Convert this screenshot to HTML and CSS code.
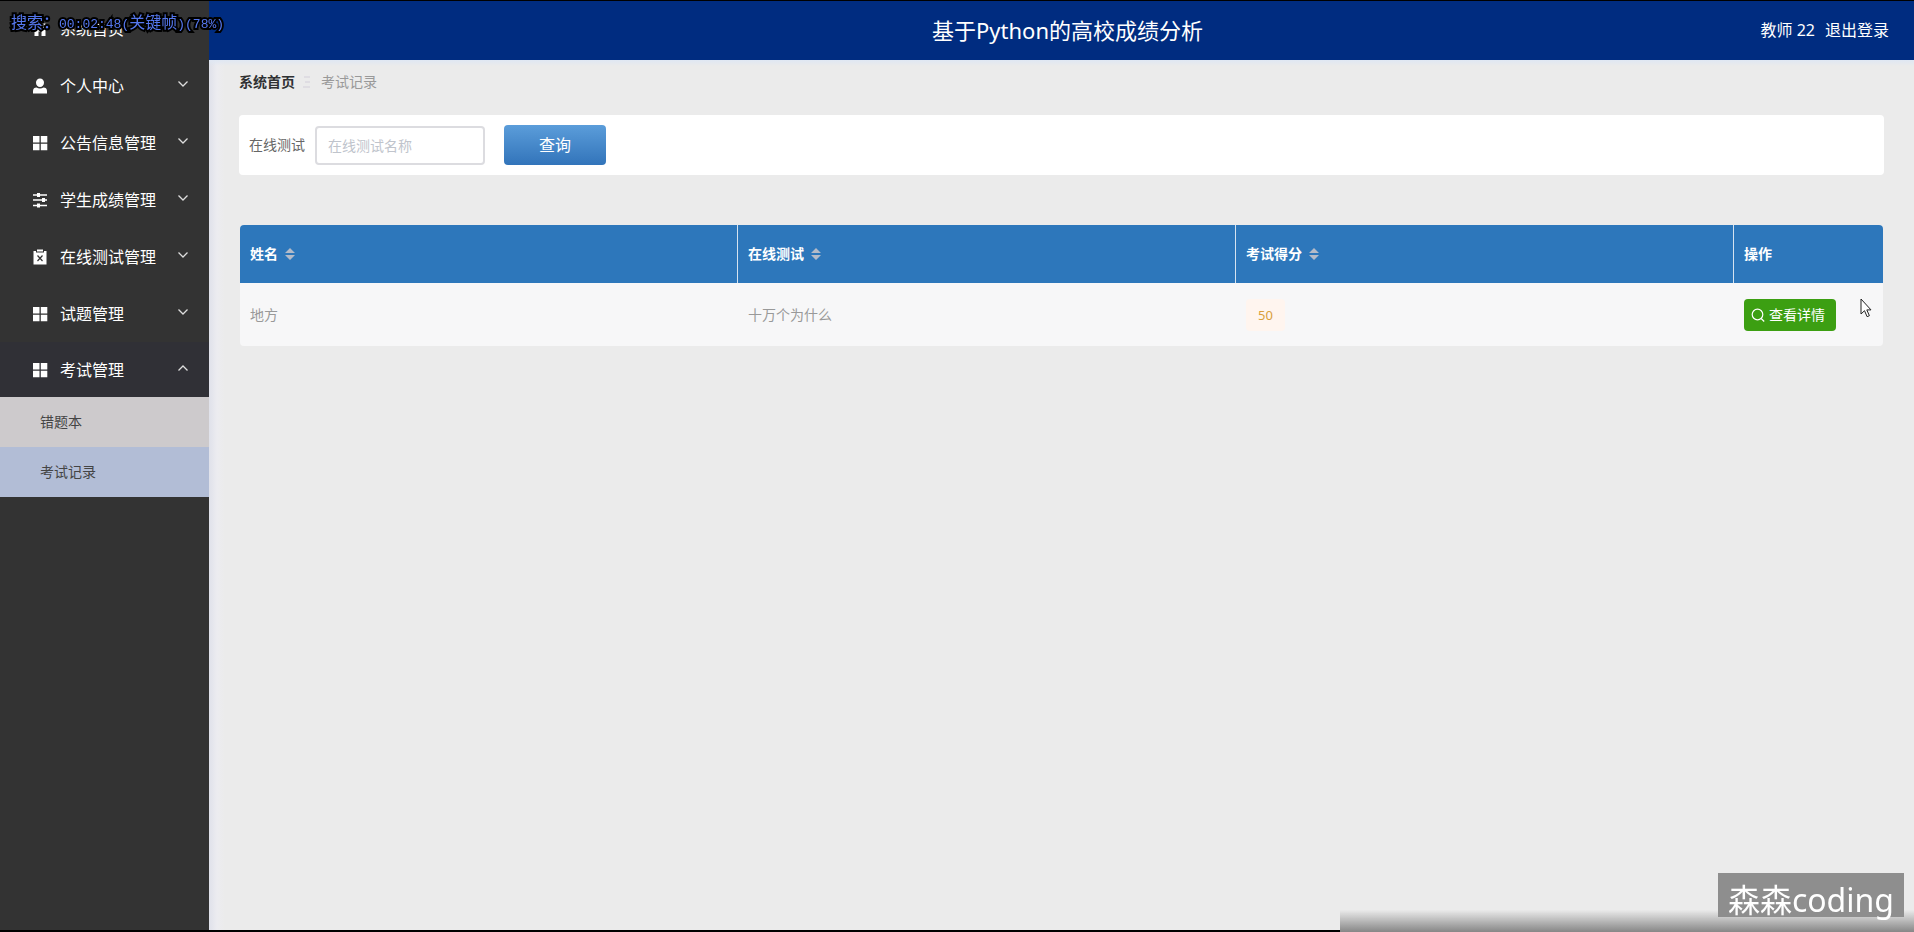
FILE: index.html
```html
<!DOCTYPE html>
<html lang="zh-CN">
<head>
<meta charset="utf-8">
<title>基于Python的高校成绩分析</title>
<link rel="stylesheet" href="styles.css">
</head>
<body>
<svg class="defs" aria-hidden="true">
  <symbol id="grid" viewBox="0 0 16 16"><path d="M1 1h6.500v6.500H1zM8.800 1h6.500v6.500H8.800zM1 8.800h6.500v6.500H1zM8.800 8.800h6.500v6.500H8.800z" fill="currentColor"/></symbol>
  <symbol id="down" viewBox="0 0 12 12"><path d="M1.500 3.500 6 8l4.500-4.500" fill="none" stroke="currentColor" stroke-width="1.300"/></symbol>
  <symbol id="up" viewBox="0 0 12 12"><path d="M1.500 8.500 6 4l4.500 4.500" fill="none" stroke="currentColor" stroke-width="1.300"/></symbol>
  <symbol id="sort" viewBox="0 0 10 12"><path d="M5 0l5 5H0zM5 12l5-5H0z" fill="currentColor"/></symbol>
</svg>
<div class="app">
  <nav class="sidebar">
    <a class="item" href="#"><svg class="icon" viewBox="0 0 16 16"><path d="M8 1 0.500 8H2.500V15H6.500V10.500H9.500V15H13.500V8H15.500L13.500 6V2.500H11.500V4.200Z" fill="currentColor"/></svg><span>系统首页</span></a>
    <button class="item"><svg class="icon" viewBox="0 0 16 16"><path d="M8 .5a4 4 0 0 1 4 4.300C12 7.500 10.200 9 8 9S4 7.500 4 4.800A4 4 0 0 1 8 .5zM1 15.500v-2.500C1 10.500 2.500 9.500 4.500 9.500 6.500 10.700 9.500 10.700 11.500 9.500 13.500 9.500 15 10.500 15 13v2.500z" fill="currentColor"/></svg><span>个人中心</span><svg class="arrow"><use href="#down"/></svg></button>
    <button class="item"><svg class="icon"><use href="#grid"/></svg><span>公告信息管理</span><svg class="arrow"><use href="#down"/></svg></button>
    <button class="item"><svg class="icon" viewBox="0 0 16 16"><path d="M1 3h14M1 8h14M1 13.500h14" stroke="currentColor" stroke-width="1.300"/><path d="M5 1h3v4H5zM10 6h3v4h-3zM5 11.500h3v4H5z" fill="currentColor"/></svg><span>学生成绩管理</span><svg class="arrow"><use href="#down"/></svg></button>
    <button class="item"><svg class="icon" viewBox="0 0 16 16"><path d="M1.500 2H4v1.500h8V2h2.500v13.500h-13zM5 .5h6v2H5z" fill="currentColor"/><path d="m5.500 6.500 5 5.500m0-5.500-5 5.500" stroke="#333" stroke-width="1.200"/></svg><span>在线测试管理</span><svg class="arrow"><use href="#down"/></svg></button>
    <button class="item"><svg class="icon"><use href="#grid"/></svg><span>试题管理</span><svg class="arrow"><use href="#down"/></svg></button>
    <button class="item open"><svg class="icon"><use href="#grid"/></svg><span>考试管理</span><svg class="arrow"><use href="#up"/></svg></button>
    <div class="submenu">
      <a href="#">错题本</a>
      <a class="current" href="#">考试记录</a>
    </div>
  </nav>
  <div class="page">
    <header class="header">
      <h1>基于Python的高校成绩分析</h1>
      <div class="user"><span>教师 22</span><a href="#">退出登录</a></div>
    </header>
    <main class="content">
      <div class="crumbs"><a href="#">系统首页</a><svg class="crumb-mark" viewBox="0 0 8 12"><path d="M1 1h6M2 6h5M0 11h7" stroke="#d3cfda" stroke-width="1"/></svg><span>考试记录</span></div>
      <form class="search">
        <label for="q">在线测试</label>
        <input id="q" type="text" placeholder="在线测试名称">
        <button type="button">查询</button>
      </form>
      <div class="table-wrap">
      <table class="records">
        <colgroup><col><col><col><col class="actions"></colgroup>
        <thead><tr>
          <th>姓名<svg class="sort"><use href="#sort"/></svg></th>
          <th>在线测试<svg class="sort"><use href="#sort"/></svg></th>
          <th>考试得分<svg class="sort"><use href="#sort"/></svg></th>
          <th>操作</th>
        </tr></thead>
        <tbody><tr>
          <td>地方</td>
          <td>十万个为什么</td>
          <td><span class="tag">50</span></td>
          <td><button class="detail"><svg viewBox="0 0 14 14"><circle cx="6.500" cy="6.500" r="5.300" fill="none" stroke="currentColor" stroke-width="1.200"/><path d="m10.200 10.500 3 3" stroke="currentColor" stroke-width="1.200"/></svg>查看详情</button></td>
        </tr></tbody>
      </table>
      </div>
    </main>
  </div>
</div>
<div class="edge-top"></div>
<div class="edge-bottom"><div class="line"></div><div class="fade"></div></div>
<div class="seek">搜索：<span>00:02:48(</span>关键帧<span>)(78%)</span></div>
<div class="watermark">森森coding</div>
<svg class="cursor" viewBox="0 0 12 20"><path d="M1 1v15l3.500-3.300 2.600 6 2.300-1-2.600-5.800H11z" fill="#fff" stroke="#222"/></svg>
</body>
</html>
```
FILE: styles.css
```css
* { box-sizing: border-box; }
body {
  margin: 0;
  font-family: "Noto Sans", "Noto Sans CJK SC", sans-serif;
  font-size: 14px;
  line-height: 20px;
  color: #666;
  background: #ebebeb;
  overflow: hidden;
}
a { color: inherit; text-decoration: none; }
button, input { font: inherit; }
.defs { position: absolute; width: 0; height: 0; }
.app { display: flex; min-height: 100vh; }

.sidebar {
  width: 209px;
  flex: none;
  background: #333;
}
.item {
  display: flex;
  align-items: center;
  width: 100%;
  height: 57px;
  padding: 0 20px 0 32px;
  border: 0;
  background: none;
  color: #fff;
  font-size: 16px;
  line-height: 24px;
  text-align: left;
}
.item span { flex: 1; }
.item.open { height: 55px; background: #303036; }
.icon { width: 16px; height: 16px; margin-right: 12px; }
.arrow { width: 12px; height: 12px; margin-bottom: 4px; color: #ddd; }
.submenu a {
  display: block;
  padding: 0 40px;
  line-height: 50px;
  color: #444;
  background: #cdcacc;
}
.submenu .current { background: #b2bdd6; }

.page { display: flex; flex-direction: column; flex: 1; min-width: 0; }
.header {
  display: grid;
  grid-template-columns: 1fr auto 1fr;
  align-items: center;
  height: 60px;
  padding: 0 25px 0 37px;
  background: #002c80;
  color: #fff;
}
.header h1 {
  grid-column: 2;
  margin: 0;
  font-size: 22px;
  line-height: 30px;
  font-weight: 400;
}
.user {
  display: flex;
  justify-content: flex-end;
  gap: 10px;
  font-size: 16px;
}
.content {
  flex: 1;
  padding: 12px 30px 0;
  background:
    linear-gradient(#dfe7f3, rgba(235, 235, 235, 0)) top / 100% 6px no-repeat,
    linear-gradient(90deg, #dfe1ea, #ececf0 8px, #ebebeb 16px);
}
.crumbs { display: flex; align-items: center; gap: 8px; color: #999; }
.crumbs a { color: #303133; font-weight: 600; }
.crumb-mark { width: 8px; height: 12px; margin-right: 2px; }

.search {
  display: flex;
  align-items: center;
  height: 60px;
  margin-top: 23px;
  padding: 0 10px;
  border-radius: 4px;
  background: #fff;
}
.search input {
  width: 170px;
  height: 39px;
  margin: 0 19px 0 10px;
  padding: 0 11px;
  border: 2px solid #dcdce0;
  border-radius: 4px;
  color: #666;
}
.search input::placeholder { color: #c0c4cc; }
.search button {
  width: 102px;
  height: 40px;
  border: 0;
  border-radius: 4px;
  background: linear-gradient(#5b9dda, #3274ba);
  color: #fff;
  font-size: 16px;
}

.table-wrap { margin-top: 50px; padding: 0 1px; }
.records {
  width: 100%;
  border-collapse: separate;
  border-spacing: 0;
  border-radius: 4px;
  overflow: hidden;
  table-layout: fixed;
  background: #f7f7f8;
}
.records .actions { width: 149px; }
.records th, .records td { padding: 0 10px; text-align: left; }
.records th {
  height: 58px;
  border-right: 1px solid #d5e3f0;
  background: #2d77bb;
  color: #fff;
  font-weight: 700;
}
.records th:last-child { border-right: 0; }
.records td { height: 63px; color: #999; }
.sort { width: 10px; height: 12px; margin-left: 7px; vertical-align: -1px; color: #b4bbc8; }
.tag {
  display: inline-block;
  padding: 0 12px;
  border-radius: 4px;
  background: #fff5ef;
  color: #d9a03c;
  font-size: 13px;
  line-height: 32px;
}
.detail {
  display: flex;
  align-items: center;
  gap: 4px;
  height: 32px;
  padding: 0 11px 0 7px;
  border: 0;
  border-radius: 4px;
  background: #3c9f12;
  color: #fff;
}
.detail svg { width: 14px; height: 14px; }

.edge-top { position: fixed; inset: 0 0 auto; height: 1px; background: #000; }
.edge-bottom { position: fixed; inset: auto 0 0; display: flex; align-items: flex-end; }
.edge-bottom .line { width: 70%; height: 2px; background: #000; }
.edge-bottom .fade { flex: 1; height: 22px; background: linear-gradient(rgba(128, 128, 128, 0), #868686); }
.seek {
  position: fixed;
  left: 11px;
  top: 11px;
  font-family: "Noto Sans CJK SC", sans-serif;
  font-size: 16px;
  color: #5577ee;
  -webkit-text-stroke: 4px #000;
  paint-order: stroke fill;
}
.seek span { font-family: "Liberation Mono", monospace; font-size: 13px; }
.watermark {
  position: fixed;
  right: 10px;
  bottom: 15px;
  height: 44px;
  padding: 0 10px;
  background: #8e8e8e;
  color: #fff;
  font-size: 32px;
  line-height: 54px;
}
.cursor { position: fixed; right: 42px; top: 298px; width: 12px; height: 20px; }
```
